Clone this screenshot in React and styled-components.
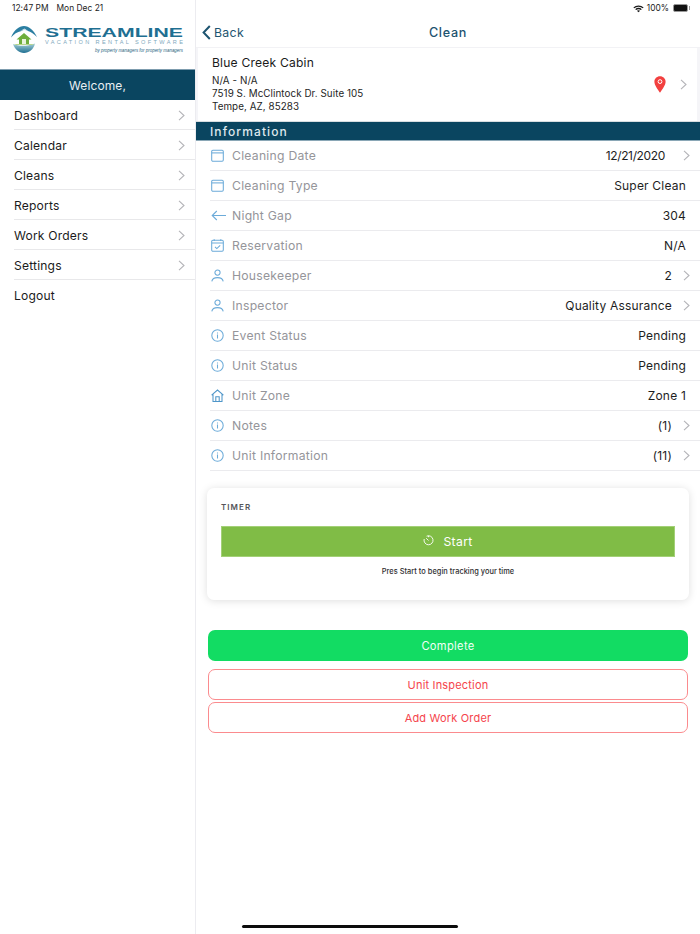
import React from 'react';
import styled, { createGlobalStyle } from 'styled-components';

const Global = createGlobalStyle`
  html, body { margin: 0; padding: 0; background: #fff; }
  body { font-family: "Inter", "Open Sans", sans-serif; color: #1c1c1e; }
  * { box-sizing: border-box; }
`;

const Page = styled.div`
  width: 700px; height: 934px; display: flex; position: relative; overflow: hidden; background: #fff;
`;
const Sidebar = styled.aside`
  width: 196px; flex: none; border-right: 1px solid #ececf0; display: flex; flex-direction: column;
`;
const StatusLeft = styled.div`
  height: 20px; padding: 3px 0 0 12px; font: 400 8.4px/10px "Inter", sans-serif; letter-spacing: .02px; display: flex; gap: 8px; align-items: flex-start; color: #222;
`;
const LogoWrap = styled.div`
  height: 49px; padding: 4px 0 0 10px;
`;
const Welcome = styled.div`
  height: 31px; background: #0a4560; color: #e8eef2; display: flex; align-items: center; justify-content: center;
  font-size: 12px; letter-spacing: .1px; border-top: 1px solid #7d9cae;
`;
const Nav = styled.nav`
  padding-left: 14px;
`;
const NavRow = styled.div`
  height: 30px; display: flex; align-items: center; justify-content: space-between; padding: 1px 10px 0 0;
  font-size: 12.1px; letter-spacing: .18px; color: #1b1b1b;
  border-bottom: ${p => (p.$last ? 'none' : '1px solid #e8e8ea')};
`;
const Main = styled.main`
  flex: 1; display: flex; flex-direction: column; min-width: 0;
`;
const StatusRight = styled.div`
  height: 20px; display: flex; align-items: flex-start; justify-content: flex-end; gap: 3px; padding: 3px 12px 0 0;
  font: 400 8.4px/10px "Inter", sans-serif; color: #222;
`;
const Battery = styled.span`
  width: 15px; height: 8px; margin: 1px 0 0 1px; border-radius: 2px; background: #111; border: 1px solid #999; position: relative;
  &::after { content: ""; position: absolute; right: -3px; top: 1px; width: 1.5px; height: 4px; background: #999; }
`;
const Header = styled.header`
  height: 27px; padding: 0 6px 2px; display: grid; grid-template-columns: 1fr auto 1fr; align-items: center; color: #1d5470;
`;
const BackLink = styled.div`
  display: flex; align-items: center; gap: 3px; font-size: 12.3px; letter-spacing: .3px;
`;
const Title = styled.div`
  font-size: 12.6px; font-weight: 500; letter-spacing: .7px; color: #1d5470;
`;
const CardBand = styled.div`
  background: #f6f6f9; border-top: 1px solid #f2f2f5;
`;
const PropertyCard = styled.section`
  height: 73px; background: #fff; padding: 7px 10px 0 14px; display: flex; justify-content: space-between; align-items: center;
  border-left: 2px solid #f5f5f8; border-right: 3px solid #f5f5f8;
`;
const PropertyText = styled.div`
  align-self: flex-start;
`;
const PropertyName = styled.div`
  font-size: 12.1px; letter-spacing: .2px; line-height: 15px; margin-bottom: 4px; color: #1b1b1b;
`;
const PropertyLine = styled.div`
  font-size: 9.8px; letter-spacing: .08px; line-height: 13px; color: #1e1e1e;
`;
const PropertyActions = styled.div`
  display: flex; align-items: center; gap: 14px; margin-top: -7px;
`;
const SectionBar = styled.div`
  height: 20px; background: #0a4560; color: #dfe8ed; font-size: 12px; font-weight: 500; letter-spacing: 1.1px;
  display: flex; align-items: center; padding-left: 14px; border-bottom: 1px solid #8aa7b6; border-top: 1px solid #d8dde0;
`;
const List = styled.div`
  padding-left: 14px;
`;
const InfoRow = styled.div`
  height: 30px; padding: 0 14px 0 0; display: flex; align-items: center; border-bottom: 1px solid #ebebee;
`;
const IconSlot = styled.span`
  width: 21px; flex: none; display: flex; align-items: center; color: #6cabd9; margin-left: 1px;
`;
const Label = styled.span`
  flex: 1; font-size: 12.2px; letter-spacing: .25px; color: #95959a;
`;
const Value = styled.span`
  font-size: 12px; letter-spacing: ${p => (p.$inset ? '-.35px' : '.2px')}; color: #1e1e1e;
  margin-right: ${p => (p.$inset ? '7px' : '0')};
`;
const ChevronSlot = styled.span`
  width: 18px; margin-right: -4px; flex: none; display: flex; justify-content: flex-end;
`;
const TimerCard = styled.section`
  margin: 17px 11px 0 11px; height: 112px; border-radius: 7px; background: #fff; padding: 13px 14px 0;
  box-shadow: 0 1px 9px rgba(0,0,0,.13);
`;
const TimerTitle = styled.div`
  font-size: 8px; font-weight: 600; letter-spacing: 1.05px; color: #55555a; line-height: 12px;
`;
const StartButton = styled.div`
  margin-top: 13px; height: 31px; background: #80bc46; color: #fff; display: flex; align-items: center; justify-content: center; gap: 9px;
  font-size: 12.2px; letter-spacing: .35px; border: 1px solid #a3d077;
`;
const TimerHint = styled.div`
  margin-top: 9px; text-align: center; font-size: 7.4px; font-weight: 500; letter-spacing: .03px; color: #2e2e30; line-height: 12px;
`;
const Actions = styled.div`
  margin: 30px 12px 0; display: flex; flex-direction: column;
`;
const CompleteButton = styled.div`
  height: 31px; border-radius: 7px; background: #12dc63; color: #f1fff6; display: flex; align-items: center; justify-content: center;
  font-size: 11.2px; letter-spacing: .3px; margin-bottom: 8px;
`;
const OutlineButton = styled.div`
  height: 31px; border-radius: 7px; border: 1px solid #fb8b8e; background: #fff; color: #f5444c; display: flex; align-items: center; justify-content: center;
  font-size: 11px; letter-spacing: .18px; margin-bottom: 2px;
`;
const HomeBar = styled.div`
  position: absolute; left: 242px; top: 925px; width: 216px; height: 3px; border-radius: 2px; background: #0c0c0c;
`;

const Chevron = ({ color = '#b4b4b8' }) => (
  <svg width="7" height="11" viewBox="0 0 7 11" fill="none">
    <path d="M1 .8 6 5.5 1 10.2" stroke={color} strokeWidth="1.1" />
  </svg>
);
const stroke = { fill: 'none', stroke: 'currentColor', strokeWidth: 1.05 };
const Cal = () => (
  <svg width="13" height="13" viewBox="0 0 13 13" {...stroke}>
    <rect x=".7" y="1.2" width="11.6" height="11" rx="1.2" />
    <path d="M.7 3.900h11.600" />
  </svg>
);
const CalCheck = () => (
  <svg width="13" height="13" viewBox="0 0 13 13" {...stroke}>
    <rect x=".7" y="1.2" width="11.6" height="11" rx="1.2" />
    <path d="M.7 3.900h11.600M3.200.3v1.600M9.800.3v1.600M4 7.800l1.800 1.800L9.200 6.300" />
  </svg>
);
const ArrowBack = () => (
  <svg width="16" height="11" viewBox="0 0 16 11" {...stroke}>
    <path d="M15 5.500H1.200M5.800 1 1.200 5.500 5.800 10" />
  </svg>
);
const Person = () => (
  <svg width="13" height="13" viewBox="0 0 13 13" {...stroke}>
    <circle cx="6.5" cy="3.6" r="2.6" />
    <path d="M.8 12.400c.4-2.600 2.600-3.800 5.700-3.800s5.300 1.200 5.700 3.800" />
  </svg>
);
const Info = () => (
  <svg width="13" height="13" viewBox="0 0 13 13" {...stroke}>
    <circle cx="6.5" cy="6.5" r="5.7" />
    <path d="M6.500 5.600v3.800M6.500 3.400v1.100" />
  </svg>
);
const Home = () => (
  <svg width="13" height="13" viewBox="0 0 13 13" {...stroke} style={{ color: '#4f96c9' }}>
    <path d="M.6 6.200 6.500 1l5.900 5.200M2 5.200v7.200h9V5.200M4.800 12.400V7.800h3.400v4.600" />
  </svg>
);
const Pin = () => (
  <svg width="12" height="17" viewBox="0 0 12 17">
    <path d="M6 .3C2.800.3.400 2.700.4 5.800c0 3.400 3.300 7.600 5.600 10.900 2.300-3.300 5.600-7.500 5.600-10.900C11.600 2.700 9.200.3 6 .3Z" fill="#f2403f" />
    <circle cx="6" cy="5.600" r="1.900" fill="none" stroke="#fff" strokeWidth="1" />
  </svg>
);
const Stopwatch = () => (
  <svg width="11" height="11" viewBox="0 0 11 11" fill="none" stroke="#fff" strokeWidth=".9" style={{ marginTop: -3 }}>
    <path d="M3.600 1.200A4.500 4.500 0 1 1 1.200 4M3.200 3.200 5.500 5.500M5.500.9v1.300" />
  </svg>
);
const Wifi = () => (
  <svg width="11" height="9" viewBox="0 0 12 9" fill="#1a1a1a" style={{ marginTop: 1 }}>
    <path d="M6 1.100c2.200 0 4.100.8 5.600 2.200l-1 1A6.600 6.600 0 0 0 6 2.500a6.600 6.600 0 0 0-4.600 1.800l-1-1A8 8 0 0 1 6 1.100Z" />
    <path d="M6 3.800c1.400 0 2.600.5 3.600 1.400l-1 1A3.800 3.800 0 0 0 6 5.200c-1 0-1.900.4-2.600 1l-1-1A5.200 5.200 0 0 1 6 3.800Z" />
    <path d="M6 6.300c.7 0 1.200.2 1.700.6L6 8.700 4.300 6.900c.5-.4 1-.6 1.700-.6Z" />
  </svg>
);
const Logo = () => (
  <svg width="184" height="32" viewBox="0 0 184 32">
    <defs>
      <linearGradient id="lg" x1="0" y1="0" x2="0" y2="1">
        <stop offset="0" stopColor="#a6d0d6" />
        <stop offset="1" stopColor="#1f6f92" />
      </linearGradient>
    </defs>
    <path d="M1 13.500C4 6 9 2 14 2s9.500 4 13 11c-3.500-3.500-6.500-5.500-9-6l-3.500-2-3 2C7 8 4 10 1 13.500Z" fill="#2c7fa2" />
    <path d="M10 7l4.500-2.500L18 7l-3.500-1Z" fill="#c9dde6" />
    <path d="M3 20c6 2.500 14 2.500 22-.5-1.500 6-6 9.500-11 9.500S5 25.500 3 20Z" fill="url(#lg)" />
    <path d="M6.500 15.500 14 9l7.500 6.500H19V20H9v-4.500Z" fill="#6fae3c" />
    <rect x="12" y="15" width="4" height="5" fill="#e9f3dc" />
    <path d="M6 20h16l2 1H4Z" fill="#b8d68c" />
    <text x="35" y="13" fontFamily="Liberation Sans, sans-serif" fontWeight="700" fontSize="12.500" fill="#1f6f92" textLength="138" lengthAdjust="spacingAndGlyphs">STREAMLINE</text>
    <text x="35" y="19.500" fontFamily="Liberation Sans, sans-serif" fontSize="5.600" fill="#7fa9bd" textLength="138" lengthAdjust="spacing">VACATION RENTAL SOFTWARE</text>
    <text x="85" y="28" fontFamily="Liberation Sans, sans-serif" fontStyle="italic" fontSize="4.600" fill="#1f5f80" textLength="88" lengthAdjust="spacingAndGlyphs">by property managers for property managers</text>
  </svg>
);

const nav = ['Dashboard', 'Calendar', 'Cleans', 'Reports', 'Work Orders', 'Settings'];
const rows = [
  [Cal, 'Cleaning Date', '12/21/2020', true, true],
  [Cal, 'Cleaning Type', 'Super Clean', false],
  [ArrowBack, 'Night Gap', '304', false],
  [CalCheck, 'Reservation', 'N/A', false],
  [Person, 'Housekeeper', '2', true],
  [Person, 'Inspector', 'Quality Assurance', true],
  [Info, 'Event Status', 'Pending', false],
  [Info, 'Unit Status', 'Pending', false],
  [Home, 'Unit Zone', 'Zone 1', false],
  [Info, 'Notes', '(1)', true],
  [Info, 'Unit Information', '(11)', true],
];

export default function App() {
  return (
    <Page>
      <Global />
      <Sidebar>
        <StatusLeft><span>12:47 PM</span><span>Mon Dec 21</span></StatusLeft>
        <LogoWrap><Logo /></LogoWrap>
        <Welcome>Welcome,</Welcome>
        <Nav>
          {nav.map(n => <NavRow key={n}>{n}<Chevron /></NavRow>)}
          <NavRow $last>Logout</NavRow>
        </Nav>
      </Sidebar>
      <Main>
        <StatusRight><Wifi /><span>100%</span><Battery /></StatusRight>
        <Header>
          <BackLink>
            <svg width="9" height="15" viewBox="0 0 9 15" fill="none"><path d="M7.800 1 1.600 7.500l6.200 6.500" stroke="#1d5470" strokeWidth="2" /></svg>
            Back
          </BackLink>
          <Title>Clean</Title>
          <span />
        </Header>
        <CardBand>
          <PropertyCard>
            <PropertyText>
              <PropertyName>Blue Creek Cabin</PropertyName>
              <PropertyLine>N/A - N/A</PropertyLine>
              <PropertyLine>7519 S. McClintock Dr. Suite 105</PropertyLine>
              <PropertyLine>Tempe, AZ, 85283</PropertyLine>
            </PropertyText>
            <PropertyActions><Pin /><Chevron /></PropertyActions>
          </PropertyCard>
        </CardBand>
        <SectionBar>Information</SectionBar>
        <List>
          {rows.map(([Icon, label, value, chev, inset]) => (
            <InfoRow key={label}>
              <IconSlot><Icon /></IconSlot>
              <Label>{label}</Label>
              <Value $inset={inset}>{value}</Value>
              {chev && <ChevronSlot><Chevron /></ChevronSlot>}
            </InfoRow>
          ))}
        </List>
        <TimerCard>
          <TimerTitle>TIMER</TimerTitle>
          <StartButton><Stopwatch />Start</StartButton>
          <TimerHint>Pres Start to begin tracking your time</TimerHint>
        </TimerCard>
        <Actions>
          <CompleteButton>Complete</CompleteButton>
          <OutlineButton>Unit Inspection</OutlineButton>
          <OutlineButton>Add Work Order</OutlineButton>
        </Actions>
      </Main>
      <HomeBar />
    </Page>
  );
}
